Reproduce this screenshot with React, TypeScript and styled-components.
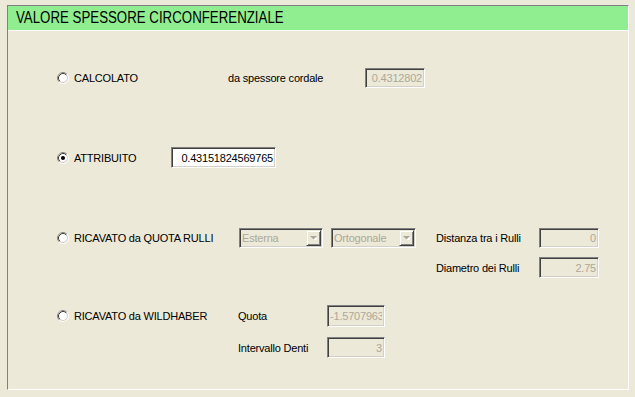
import styled, { createGlobalStyle } from "styled-components";

const GlobalStyle = createGlobalStyle`
  html, body {
    margin: 0;
    padding: 0;
    background: #ece9d8;
  }
  body {
    font-family: "Liberation Sans", Arial, sans-serif;
    font-size: 11px;
    color: #000;
  }
`;

function RadioMark({ checked }: { checked?: boolean }) {
  return (
    <svg width="12" height="12" viewBox="0 0 12 12">
      <circle cx="6" cy="6" r="5.5" fill="none" stroke="#ffffff" />
      <path d="M2.11 9.89 A5.5 5.5 0 0 1 9.89 2.11" fill="none" stroke="#808080" />
      <circle cx="6" cy="6" r="4.5" fill="#ffffff" stroke="#d4d0c8" />
      <path d="M2.82 9.18 A4.5 4.5 0 0 1 9.18 2.82" fill="none" stroke="#404040" />
      {checked && <circle cx="6" cy="6" r="2" fill="#000" />}
    </svg>
  );
}

function ComboArrow() {
  return (
    <svg width="7" height="4" viewBox="0 0 7 4">
      <path d="M1 1 L8 1 L4.5 4.5 Z" transform="translate(0.5,0.5)" fill="#ffffff" />
      <path d="M0 0 L7 0 L3.5 3.5 Z" fill="#aca899" />
    </svg>
  );
}

interface OptionProps {
  label: string;
  width: number;
  height: number;
  checked?: boolean;
}

function Option({ label, width, height, checked }: OptionProps) {
  return (
    <OptionLabel $width={width} $height={height}>
      <RadioMark checked={checked} />
      <span>{label}</span>
    </OptionLabel>
  );
}

export default function App() {
  return (
    <>
      <GlobalStyle />
      <Screen>
        <Frame>
          <Header>
            <HeaderText>VALORE SPESSORE CIRCONFERENZIALE</HeaderText>
          </Header>
          <Body>
            <Section $top={37}>
              <Option label="CALCOLATO" width={171} height={20} />
              <FieldGrid $label={137} $box={60} $gap={0}>
                <FieldLabel $height={20}>da spessore cordale</FieldLabel>
                <TextBox $height={20} $disabled readOnly value="0.4312802" />
              </FieldGrid>
            </Section>

            <Section $top={59}>
              <Option label="ATTRIBUITO" width={114} height={21} checked />
              <TextBox $height={21} $width={105} readOnly value="0.43151824569765" />
            </Section>

            <Section $top={60}>
              <Option label="RICAVATO da QUOTA RULLI" width={182} height={20} />
              <Combo $width={84}>
                <ComboText>Esterna</ComboText>
                <ComboButton>
                  <ComboArrow />
                </ComboButton>
              </Combo>
              <Combo $width={85} $left={8}>
                <ComboText>Ortogonale</ComboText>
                <ComboButton>
                  <ComboArrow />
                </ComboButton>
              </Combo>
              <FieldGrid $label={103} $box={60} $gap={9} $left={20}>
                <FieldLabel $height={20}>Distanza tra i Rulli</FieldLabel>
                <TextBox $height={20} $disabled readOnly value="0" />
                <FieldLabel $height={21}>Diametro dei Rulli</FieldLabel>
                <TextBox $height={21} $disabled readOnly value="2.75" />
              </FieldGrid>
            </Section>

            <Section $top={27}>
              <Option label="RICAVATO da WILDHABER" width={181} height={22} />
              <FieldGrid $label={89} $box={58} $gap={10}>
                <FieldLabel $height={22}>Quota</FieldLabel>
                <TextBox $height={22} $disabled readOnly value="-1.5707963" />
                <FieldLabel $height={21}>Intervallo Denti</FieldLabel>
                <TextBox $height={21} $disabled readOnly value="3" />
              </FieldGrid>
            </Section>
          </Body>
        </Frame>
      </Screen>
    </>
  );
}

const Screen = styled.div`
  width: 635px;
  height: 397px;
  box-sizing: border-box;
  padding: 5px 0 0 7px;
`;

const Frame = styled.section`
  width: 622px;
  height: 385px;
  box-sizing: border-box;
  border: 1px solid;
  border-color: #808080 #ffffff #ffffff #808080;
  display: flex;
  flex-direction: column;
`;

const Header = styled.h1`
  margin: 0;
  height: 25px;
  box-sizing: border-box;
  padding-left: 8px;
  background: #90ee90;
  border-bottom: 1px solid #ffffff;
  font-family: "Liberation Sans", Arial, sans-serif;
  font-weight: normal;
  font-size: 16px;
  line-height: 24px;
  white-space: nowrap;
  overflow: hidden;
`;

const HeaderText = styled.span`
  display: inline-block;
  transform: scaleX(0.83);
  transform-origin: left center;
`;

const Body = styled.div`
  display: flex;
  flex-direction: column;
  padding-left: 49px;
`;

const Section = styled.div<{ $top: number }>`
  display: flex;
  align-items: flex-start;
  margin-top: ${({ $top }) => $top}px;
`;

const OptionLabel = styled.label<{ $width: number; $height: number }>`
  display: flex;
  align-items: center;
  gap: 5px;
  flex: none;
  width: ${({ $width }) => $width}px;
  height: ${({ $height }) => $height}px;
  letter-spacing: -0.2px;
  white-space: nowrap;

  svg {
    flex: none;
  }
`;

const FieldGrid = styled.div<{ $label: number; $box: number; $gap: number; $left?: number }>`
  display: grid;
  grid-template-columns: ${({ $label, $box }) => `${$label}px ${$box}px`};
  row-gap: ${({ $gap }) => $gap}px;
  margin-left: ${({ $left }) => $left ?? 0}px;
`;

const FieldLabel = styled.span<{ $height: number }>`
  display: flex;
  align-items: center;
  height: ${({ $height }) => $height}px;
  letter-spacing: -0.2px;
  white-space: nowrap;
`;

const TextBox = styled.input<{ $height: number; $width?: number; $disabled?: boolean }>`
  box-sizing: border-box;
  width: ${({ $width }) => ($width ? `${$width}px` : "100%")};
  height: ${({ $height }) => $height}px;
  margin: 0;
  padding: 0 2px 0 2px;
  border: 1px solid;
  border-color: #808080 #ffffff #ffffff #808080;
  box-shadow: inset 1px 1px 0 #404040, inset -1px -1px 0 #d4d0c8;
  background: ${({ $disabled }) => ($disabled ? "#ece9d8" : "#ffffff")};
  color: ${({ $disabled }) => ($disabled ? "#aca899" : "#000000")};
  font-family: "Liberation Sans", Arial, sans-serif;
  font-size: 11px;
  letter-spacing: -0.2px;
  text-align: right;
  outline: none;
`;

const Combo = styled.div<{ $width: number; $left?: number }>`
  box-sizing: border-box;
  display: flex;
  align-items: stretch;
  width: ${({ $width }) => $width}px;
  height: 20px;
  margin-left: ${({ $left }) => $left ?? 0}px;
  border: 1px solid;
  border-color: #808080 #ffffff #ffffff #808080;
  box-shadow: inset 1px 1px 0 #404040, inset -1px -1px 0 #d4d0c8;
  padding: 1px;
`;

const ComboText = styled.span`
  flex: 1;
  display: flex;
  align-items: center;
  padding-left: 1px;
  color: #aca899;
  letter-spacing: -0.2px;
  white-space: nowrap;
  overflow: hidden;
`;

const ComboButton = styled.span`
  box-sizing: border-box;
  flex: none;
  width: 15px;
  display: flex;
  align-items: center;
  justify-content: center;
  background: #ece9d8;
  border: 1px solid;
  border-color: #ece9d8 #404040 #404040 #ece9d8;
  box-shadow: inset 1px 1px 0 #ffffff, inset -1px -1px 0 #808080;
`;
